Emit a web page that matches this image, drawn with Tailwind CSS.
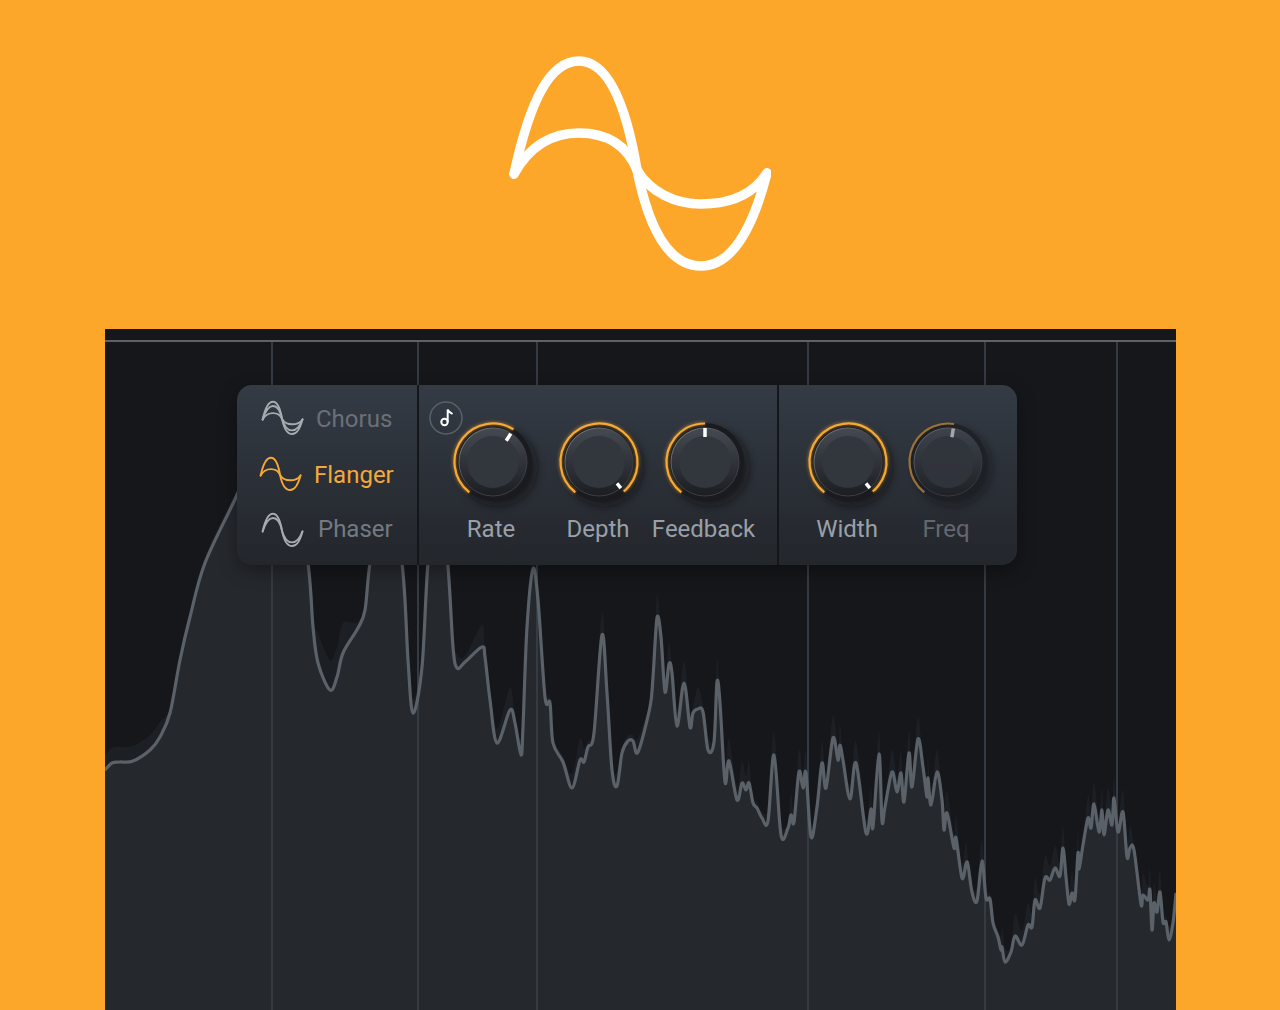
<!DOCTYPE html>
<html lang="en">
<head>
    <meta charset="UTF-8">
    <meta name="viewport" content="width=device-width, initial-scale=1.0">
    <title>Flanger</title>
    <script src="https://cdn.jsdelivr.net/npm/@tailwindcss/browser@4"></script>
</head>
<body class="bg-[#fca62a] h-[1010px] overflow-hidden font-['Roboto',sans-serif]">
    <!-- shared shapes -->
    <svg width="0" height="0" class="absolute">
        <defs>
            <path id="wave-tall" d="M514 174C530 100 550 61 579 61C610 61 627 110 637 170C650 235 672 266 701 266C730 266 752 232 767 173"/>
            <path id="wave-mid" d="M514 174C530 122 552 88 579 88C608 88 628 125 637 170C650 215 674 243 701 243C730 243 752 212 767 173"/>
            <path id="wave-low" d="M514 174C530 145 552 133 579 133C610 133 628 148 637 170C650 192 675 204 701 204C730 204 753 195 767 173"/>
            <linearGradient id="knob-body" x1="0" y1="0" x2="0" y2="1">
                <stop offset="0" stop-color="#454a52"/>
                <stop offset="1" stop-color="#1b1d21"/>
            </linearGradient>
            <linearGradient id="knob-edge" x1="0" y1="0" x2="1" y2="1">
                <stop offset="0" stop-color="#8b9097"/>
                <stop offset="0.5" stop-color="#3a3e45"/>
            </linearGradient>
            <filter id="soft" x="-40%" y="-40%" width="180%" height="180%"><feGaussianBlur stdDeviation="4"/></filter>
            <filter id="glow" x="-20%" y="-20%" width="140%" height="140%"><feGaussianBlur stdDeviation="1.6"/></filter>
            <g id="knob">
                <circle cx="55" cy="55" r="39" fill="#0d0e10" opacity="0.6" filter="url(#soft)"/>
                <circle cx="50" cy="50" r="39" fill="#191b1f"/>
                <circle cx="50" cy="50" r="34" fill="url(#knob-body)" stroke="url(#knob-edge)" stroke-width="1"/>
                <circle cx="50" cy="50" r="26" fill="#32363d"/>
            </g>
        </defs>
    </svg>

    <!-- logo -->
    <div class="h-[329px] pb-[2px] flex items-center justify-center">
        <svg width="262" height="217" viewBox="509 55 262 217" fill="none" stroke="#ffffff" stroke-width="9.5" stroke-linecap="round" stroke-linejoin="round">
            <use href="#wave-tall"/>
            <use href="#wave-low"/>
        </svg>
    </div>

    <!-- spectrum -->
    <div class="relative mx-[105px] w-[1071px] h-[681px] bg-[#15171b]">
        <svg class="block" width="1071" height="681" viewBox="105 329 1071 681" fill="none">
            <path id="ghost" fill="#1c1f24"/>
            <path id="fill" fill="#25282d"/>
            <g stroke="#353b43" stroke-width="2">
                <path d="M272 342V1010M418 342V1010M537 342V1010M808 342V1010M985 342V1010M1117 342V1010"/>
            </g>
            <path d="M105 341H1176" stroke="#5c6269" stroke-width="2"/>
            <path id="line" stroke="#5a6168" stroke-width="3.2" stroke-linejoin="round"/>
        </svg>

        <!-- plugin panel -->
        <div class="absolute left-[132px] top-[56px] w-[780px] h-[180px] flex rounded-[15px] overflow-hidden bg-linear-to-b from-[#343b45] to-[#23262b] shadow-[0_6px_18px_rgba(0,0,0,0.35)]">
            <div class="w-[180px] pl-[24px] pt-[15px] flex flex-col gap-[21px] text-[24px] leading-[35px]">
                <div class="h-[35px] flex items-center gap-[12px] text-[#6b7078]">
                    <svg width="43" height="35" viewBox="509 50 262 222" fill="none" stroke="#a6abb1" stroke-width="12" stroke-linecap="round" stroke-linejoin="round">
                        <use href="#wave-tall"/><use href="#wave-mid"/><use href="#wave-low"/>
                    </svg>
                    <span class="pt-[4px]">Chorus</span>
                </div>
                <div class="h-[35px] -ml-[2px] flex items-center gap-[12px] text-[#f5a938]">
                    <svg width="43" height="35" viewBox="509 50 262 222" fill="none" stroke="#f5a938" stroke-width="12" stroke-linecap="round" stroke-linejoin="round">
                        <use href="#wave-tall"/><use href="#wave-low"/>
                    </svg>
                    <span class="pt-[4px]">Flanger</span>
                </div>
                <div class="h-[35px] flex items-center gap-[14px] text-[#747a82]">
                    <svg width="43" height="35" viewBox="509 50 262 222" fill="none" stroke="#a6abb1" stroke-width="12" stroke-linecap="round" stroke-linejoin="round">
                        <use href="#wave-tall"/><use href="#wave-mid"/>
                    </svg>
                    <span>Phaser</span>
                </div>
            </div>

            <div class="w-[2px] bg-[#14161a]"></div>

            <div class="relative w-[358px] pl-[21px] pt-[27px] flex text-[24px] leading-[28px] text-[#9aa0a8]">
                <svg class="absolute left-[10px] top-[16px]" width="34" height="34" viewBox="0 0 34 34" fill="none">
                    <circle cx="17" cy="17" r="16" stroke="#5a6068" stroke-width="1.5"/>
                    <circle cx="15.5" cy="21" r="3.2" stroke="#ffffff" stroke-width="2"/>
                    <path d="M18.7 21V8.5C19.2 11 21.5 11.5 23.5 13" stroke="#ffffff" stroke-width="2"/>
                </svg>
                <div class="w-[106px] flex flex-col items-center">
                    <svg width="100" height="100" viewBox="0 0 100 100" fill="none" class="overflow-visible">
                        <use href="#knob"/>
                        <circle cx="50" cy="50" r="38.5" pathLength="360" stroke="#f7a936" stroke-width="4" opacity="0.4" stroke-dasharray="174 186" transform="rotate(128 50 50)" filter="url(#glow)"/>
                        <circle cx="50" cy="50" r="38.5" pathLength="360" stroke="#f7a936" stroke-width="2.2" stroke-dasharray="174 186" transform="rotate(128 50 50)"/>
                        <path d="M50 16.5V25" stroke="#ffffff" stroke-width="3.5" transform="rotate(32 50 50)"/>
                    </svg>
                    <span class="mt-[3px] -ml-[4px]">Rate</span>
                </div>
                <div class="w-[106px] flex flex-col items-center">
                    <svg width="100" height="100" viewBox="0 0 100 100" fill="none" class="overflow-visible">
                        <use href="#knob"/>
                        <circle cx="50" cy="50" r="38.5" pathLength="360" stroke="#f7a936" stroke-width="4" opacity="0.4" stroke-dasharray="282 78" transform="rotate(128 50 50)" filter="url(#glow)"/>
                        <circle cx="50" cy="50" r="38.5" pathLength="360" stroke="#f7a936" stroke-width="2.2" stroke-dasharray="282 78" transform="rotate(128 50 50)"/>
                        <path d="M50 16V22" stroke="#ffffff" stroke-width="3.5" transform="rotate(140 50 50)"/>
                    </svg>
                    <span class="mt-[3px] -ml-[2px]">Depth</span>
                </div>
                <div class="w-[106px] flex flex-col items-center">
                    <svg width="100" height="100" viewBox="0 0 100 100" fill="none" class="overflow-visible">
                        <use href="#knob"/>
                        <circle cx="50" cy="50" r="38.5" pathLength="360" stroke="#f7a936" stroke-width="4" opacity="0.4" stroke-dasharray="142 218" transform="rotate(128 50 50)" filter="url(#glow)"/>
                        <circle cx="50" cy="50" r="38.5" pathLength="360" stroke="#f7a936" stroke-width="2.2" stroke-dasharray="142 218" transform="rotate(128 50 50)"/>
                        <path d="M50 16V25" stroke="#ffffff" stroke-width="3.5"/>
                    </svg>
                    <span class="mt-[3px] -ml-[3px] whitespace-nowrap">Feedback</span>
                </div>
            </div>

            <div class="w-[2px] bg-[#14161a]"></div>

            <div class="pl-[19px] pt-[27px] flex text-[24px] leading-[28px] text-[#9aa0a8]">
                <div class="w-[100px] flex flex-col items-center">
                    <svg width="100" height="100" viewBox="0 0 100 100" fill="none" class="overflow-visible">
                        <use href="#knob"/>
                        <circle cx="50" cy="50" r="38.5" pathLength="360" stroke="#f7a936" stroke-width="4" opacity="0.4" stroke-dasharray="282 78" transform="rotate(128 50 50)" filter="url(#glow)"/>
                        <circle cx="50" cy="50" r="38.5" pathLength="360" stroke="#f7a936" stroke-width="2.2" stroke-dasharray="282 78" transform="rotate(128 50 50)"/>
                        <path d="M50 16V22" stroke="#ffffff" stroke-width="3.5" transform="rotate(140 50 50)"/>
                    </svg>
                    <span class="mt-[3px] -ml-[2px]">Width</span>
                </div>
                <div class="w-[100px] flex flex-col items-center text-[#63686f]">
                    <svg width="100" height="100" viewBox="0 0 100 100" fill="none" class="overflow-visible">
                        <use href="#knob" opacity="0.7"/>
                        <circle cx="50" cy="50" r="38.5" pathLength="360" stroke="#9a7235" stroke-width="2.2" stroke-dasharray="151 209" transform="rotate(128 50 50)"/>
                        <path d="M50 16V25" stroke="#a3a6aa" stroke-width="3.5" transform="rotate(9 50 50)"/>
                    </svg>
                    <span class="mt-[3px] -ml-[4px]">Freq</span>
                </div>
            </div>
        </div>
    </div>

    <script>
        // spectrum points traced from the reference, in page coordinates
        const pts = [[105,770],[112,763],[120,762],[133,761],[150,750],[160,737],[170,713],[180,660],[190,617],[205,563],[237,495],[260,440],[290,440],[308,563],[313,627],[318,663],[330,690],[337,677],[343,653],[358,628],[365,610],[370,563],[385,470],[402,563],[408,660],[413,713],[422,667],[428,563],[438,470],[448,567],[453,647],[457,668],[465,662],[482,647],[485,657],[490,700],[497,743],[510,710],[515,723],[521,755],[523,727],[527,627],[533,569],[538,600],[545,697],[550,703],[553,743],[563,762],[572,788],[580,760],[584,762],[588,747],[594,733],[602,635],[607,693],[612,770],[617,786],[622,753],[628,741],[633,741],[638,752],[650,707],[653,677],[657,618],[661,637],[665,692],[669,664],[672,673],[677,726],[684,683],[690,727],[693,713],[698,709],[703,712],[708,750],[714,742],[717,682],[720,703],[725,782],[729,761],[737,800],[742,783],[746,790],[749,783],[753,803],[757,808],[762,818],[768,821],[774,755],[781,835],[788,828],[791,815],[794,822],[799,772],[803,788],[806,773],[811,837],[817,807],[822,763],[826,788],[833,738],[838,760],[840,745],[843,760],[850,799],[856,763],[866,833],[871,809],[873,827],[879,754],[882,821],[885,807],[892,772],[897,792],[901,773],[904,802],[909,753],[912,787],[918,739],[923,767],[927,797],[928,778],[931,805],[937,772],[942,800],[944,830],[947,813],[954,848],[956,838],[962,878],[966,864],[968,865],[972,892],[977,901],[982,861],[986,898],[990,899],[993,923],[998,937],[1001,950],[1002,947],[1005,962],[1011,952],[1015,936],[1022,945],[1028,925],[1032,927],[1035,900],[1040,908],[1045,878],[1050,880],[1055,868],[1060,876],[1063,848],[1066,877],[1069,904],[1072,893],[1075,899],[1078,853],[1079,869],[1083,845],[1088,818],[1091,828],[1094,804],[1099,832],[1102,810],[1104,835],[1108,810],[1112,825],[1114,798],[1118,832],[1123,812],[1127,857],[1130,848],[1134,850],[1141,904],[1143,895],[1148,900],[1150,890],[1152,930],[1154,903],[1157,912],[1160,892],[1163,922],[1166,922],[1169,940],[1173,923],[1176,893]];

        // catmull-rom through the points
        function smooth(p) {
            let d = 'M' + p[0][0] + ' ' + p[0][1];
            for (let i = 0; i < p.length - 1; i++) {
                const a = p[Math.max(i - 1, 0)], b = p[i], c = p[i + 1], e = p[Math.min(i + 2, p.length - 1)];
                d += 'C' + (b[0] + (c[0] - a[0]) / 6).toFixed(1) + ' ' + (b[1] + (c[1] - a[1]) / 6).toFixed(1) + ' ' +
                    (c[0] - (e[0] - b[0]) / 6).toFixed(1) + ' ' + (c[1] - (e[1] - b[1]) / 6).toFixed(1) + ' ' + c[0] + ' ' + c[1];
            }
            return d;
        }

        // the held peaks sit a little above the live line, most of all at the spikes
        const held = pts.map((p, i) => {
            const prev = pts[Math.max(i - 1, 0)][1], next = pts[Math.min(i + 1, pts.length - 1)][1];
            let lift = 6;
            if (p[1] < prev && p[1] < next) lift = 22;
            else if (p[1] > prev && p[1] > next) lift = 14;
            if (p[0] < 165) lift = 15;
            if (p[0] > 315 && p[0] < 345) lift = 30;
            return [p[0], p[1] - lift];
        });

        const lineD = smooth(pts);
        document.getElementById('line').setAttribute('d', lineD);
        document.getElementById('fill').setAttribute('d', lineD + 'L1176 1010L105 1010Z');
        document.getElementById('ghost').setAttribute('d', smooth(held) + 'L1176 1010L105 1010Z');
    </script>
</body>
</html>
